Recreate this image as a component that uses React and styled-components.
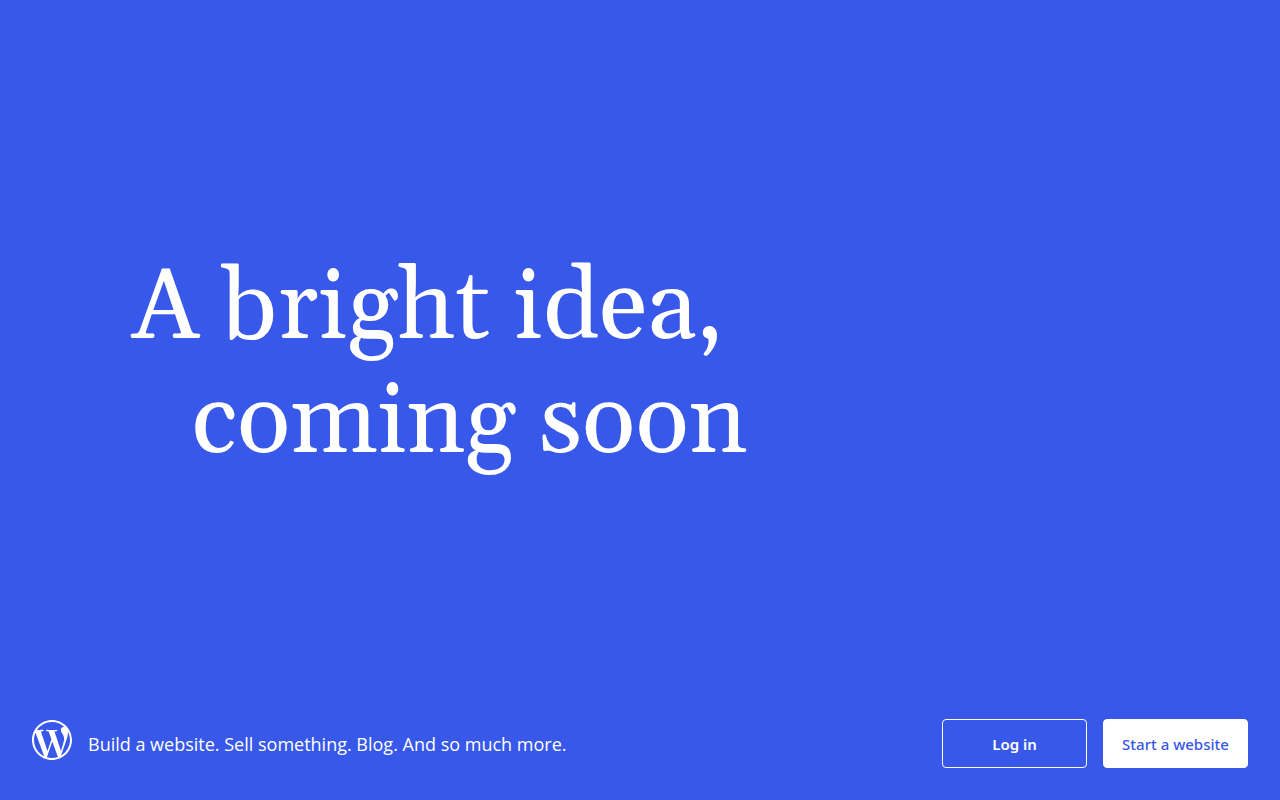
import React from 'react'
import styled, { createGlobalStyle } from 'styled-components';
import { SiWordpress } from 'react-icons/si';

const App = () => {
    return (
        <>
            <GlobalStyle/>
            <Wrapper>
                <Main>
                    <Title>
                        <TitleLine>A bright idea,</TitleLine>
                        <TitleLine $indent>coming soon</TitleLine>
                    </Title>
                </Main>

                <Footer>
                    <LogoLink href="#" aria-label="WordPress.com">
                        <SiWordpress size={40}/>
                    </LogoLink>
                    <Tagline>Build a website. Sell something. Blog. And so much more.</Tagline>

                    <ButtonsWrapper>
                        <Button type="button">Log in</Button>
                        <Button type="button" $primary>Start a website</Button>
                    </ButtonsWrapper>
                </Footer>
            </Wrapper>
        </>
    )
}

export default App

const GlobalStyle = createGlobalStyle`
    * {
        box-sizing: border-box;
    }

    body {
        margin: 0;
        background: #3858e9;
        color: #fff;
        font-family: "Noto Sans", "Open Sans", sans-serif;
    }
`

const Wrapper = styled.div`
    min-height: 100vh;
    display: flex;
    flex-direction: column;
`

const Main = styled.main`
    flex: 1;
    display: flex;
    align-items: center;
    padding: 44px 10% 0;
`

const Title = styled.h1`
    margin: 0;
    font-family: Georgia, Gelasio, "Liberation Serif", serif;
    font-size: 99px;
    font-weight: 400;
    line-height: 114px;
`

const TitleLine = styled.span`
    display: block;
    padding-left: ${({ $indent }) => ($indent ? '64px' : '4px')};
`

const Footer = styled.footer`
    display: flex;
    align-items: center;
    padding: 32px;
`

const LogoLink = styled.a`
    display: flex;
    margin: 0 16px 8px 0;
    color: #fff;
`

const Tagline = styled.p`
    margin: 0;
    font-family: "Open Sans", sans-serif;
    font-size: 18px;
    line-height: 24px;
`

const ButtonsWrapper = styled.div`
    display: flex;
    gap: 16px;
    margin-left: auto;
`

const Button = styled.button`
    width: 145px;
    height: 49px;
    padding: 0;
    border: 1px solid #fff;
    border-radius: 4px;
    background: ${({ $primary }) => ($primary ? '#fff' : 'transparent')};
    color: ${({ $primary }) => ($primary ? '#3858e9' : '#fff')};
    font-family: inherit;
    font-size: 15px;
    font-weight: ${({ $primary }) => ($primary ? 500 : 600)};
    cursor: pointer;
`
